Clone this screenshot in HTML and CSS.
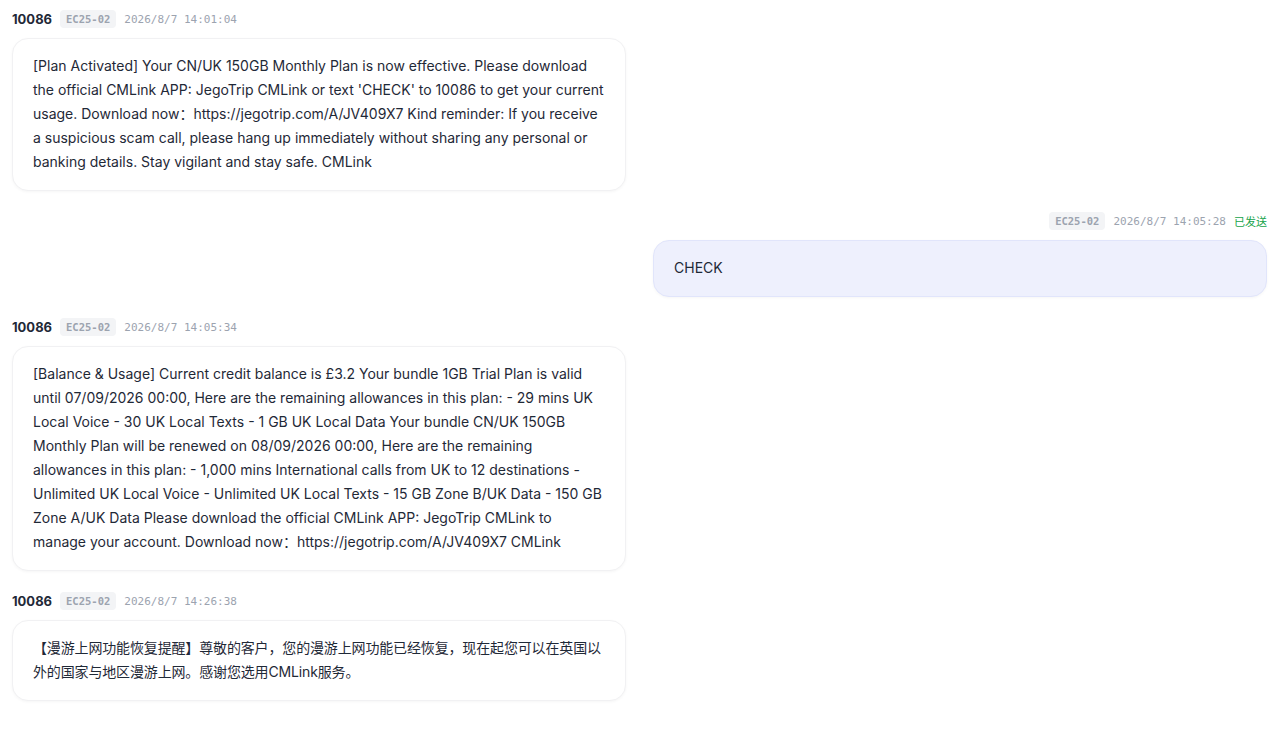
FILE: index.html
```html
<!DOCTYPE html>
<html lang="en">
<head>
    <meta charset="UTF-8">
    <meta name="viewport" content="width=device-width, initial-scale=1.0">
    <title>Messages</title>
    <link rel="stylesheet" href="styles.css">
</head>
<body>
    <div class="thread">
        <div class="msg in">
            <div class="meta">
                <span class="sender">10086</span>
                <span class="device">EC25-02</span>
                <span class="time">2026/8/7 14:01:04</span>
            </div>
            <div class="bubble">[Plan Activated] Your CN/UK 150GB Monthly Plan is now effective. Please download the official CMLink APP: JegoTrip CMLink or text 'CHECK' to 10086 to get your current usage. Download now：https://jegotrip.com/A/JV409X7 Kind reminder: If you receive a suspicious scam call, please hang up immediately without sharing any personal or banking details. Stay vigilant and stay safe. CMLink</div>
        </div>

        <div class="msg out">
            <div class="meta">
                <span class="device">EC25-02</span>
                <span class="time">2026/8/7 14:05:28</span>
                <span class="state">已发送</span>
            </div>
            <div class="bubble">CHECK</div>
        </div>

        <div class="msg in">
            <div class="meta">
                <span class="sender">10086</span>
                <span class="device">EC25-02</span>
                <span class="time">2026/8/7 14:05:34</span>
            </div>
            <div class="bubble">[Balance &amp; Usage] Current credit balance is £3.2 Your bundle 1GB Trial Plan is valid until 07/09/2026 00:00, Here are the remaining allowances in this plan: - 29 mins UK Local Voice - 30 UK Local Texts - 1 GB UK Local Data Your bundle CN/UK 150GB Monthly Plan will be renewed on 08/09/2026 00:00, Here are the remaining allowances in this plan: - 1,000 mins International calls from UK to 12 destinations - Unlimited UK Local Voice - Unlimited UK Local Texts - 15 GB Zone B/UK Data - 150 GB Zone A/UK Data Please download the official CMLink APP: JegoTrip CMLink to manage your account. Download now：https://jegotrip.com/A/JV409X7 CMLink</div>
        </div>

        <div class="msg in">
            <div class="meta">
                <span class="sender">10086</span>
                <span class="device">EC25-02</span>
                <span class="time">2026/8/7 14:26:38</span>
            </div>
            <div class="bubble cjk">【漫游上网功能恢复提醒】尊敬的客户，您的漫游上网功能已经恢复，现在起您可以在英国以外的国家与地区漫游上网。感谢您选用CMLink服务。</div>
        </div>
    </div>
</body>
</html>
```

FILE: styles.css
```css
body {
    margin: 0;
    background-color: #fff;
    font-family: Inter, "Noto Sans CJK SC", sans-serif;
    color: #1f2937;
}
.thread {
    display: flex;
    flex-direction: column;
    gap: 20px;
    padding: 9px 13px 12px 12px;
}
.msg {
    display: flex;
    flex-direction: column;
    gap: 9px;
}
.msg.in {
    align-items: flex-start;
}
.msg.out {
    align-items: flex-end;
}
.meta {
    display: flex;
    align-items: center;
    gap: 8px;
    height: 20px;
}
.sender {
    font-size: 13px;
    font-weight: 700;
    color: #1f2937;
}
.device {
    font-family: "DejaVu Sans Mono", monospace;
    font-size: 10.5px;
    font-weight: 700;
    color: #9ca3af;
    background-color: #f3f4f6;
    border-radius: 4px;
    padding: 2px 6px;
    line-height: 14px;
}
.time {
    font-family: "DejaVu Sans Mono", monospace;
    font-size: 11px;
    color: #9ca3af;
}
.state {
    font-size: 11px;
    color: #16a34a;
}
.bubble {
    box-sizing: border-box;
    width: 614px;
    padding: 15px 20px 16px;
    font-size: 14px;
    line-height: 24px;
    border-radius: 16px;
    border: 1px solid #f1f1f3;
    background-color: #fff;
    box-shadow: 0 1px 3px rgba(0, 0, 0, 0.04);
}
.bubble.cjk {
    letter-spacing: -0.15px;
}
.out .bubble {
    background-color: #eef0fd;
    border-color: #e1e5fb;
}
```
